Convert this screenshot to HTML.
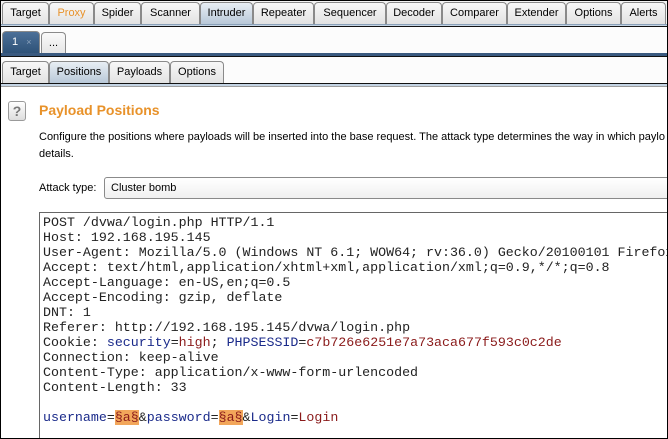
<!DOCTYPE html>
<html style="width:668px;height:439px;overflow:hidden"><head><style>
*{margin:0;padding:0;box-sizing:border-box}
html,body{width:668px;height:439px;overflow:hidden}
body{background:#fff;font-family:"Liberation Sans",sans-serif;font-size:11px;color:#000;position:relative}
.frame{position:absolute;left:0;top:0;width:668px;height:439px;border:1px solid #000;pointer-events:none;z-index:5}
.tab{position:absolute;height:22px;border:1px solid #8a8a8a;border-bottom:none;border-radius:4px 4px 0 0;background:linear-gradient(#f8f8f8,#e2e2e2);text-align:center;line-height:21px;font-size:11px}
.sel{background:linear-gradient(#e8eef4,#b8c8d8)}
.bar{position:absolute;left:0;width:668px}
.mono{font-family:"Liberation Mono","DejaVu Sans Mono",monospace;font-size:13.3px;line-height:15px;white-space:pre;color:#222;overflow:hidden}
.b{color:#1a2a8a}.r{color:#8a1a1a}.h{background:#f2a65a;color:#8a1a1a}
</style></head><body>
<div class="frame"></div>
<div class="bar" style="top:0;height:24px;background:#f4f4f4"></div>
<div class="tab" style="left:2px;width:47px;top:2px">Target</div>
<div class="tab" style="left:49px;width:45px;top:2px;color:#e8922a">Proxy</div>
<div class="tab" style="left:94px;width:47px;top:2px">Spider</div>
<div class="tab" style="left:141px;width:59px;top:2px">Scanner</div>
<div class="tab sel" style="left:200px;width:53px;top:2px">Intruder</div>
<div class="tab" style="left:253px;width:61px;top:2px">Repeater</div>
<div class="tab" style="left:314px;width:72px;top:2px">Sequencer</div>
<div class="tab" style="left:386px;width:56px;top:2px">Decoder</div>
<div class="tab" style="left:442px;width:65px;top:2px">Comparer</div>
<div class="tab" style="left:507px;width:59px;top:2px">Extender</div>
<div class="tab" style="left:566px;width:55px;top:2px">Options</div>
<div class="tab" style="left:621px;width:45px;top:2px">Alerts</div>
<div class="bar" style="top:24px;height:3px;background:#c4d4e4;border-top:1px solid #8aa0b8;border-bottom:1px solid #111"></div>
<div class="bar" style="top:27px;height:26px;background:#fcfcfc"></div>
<div class="tab" style="left:2px;width:38px;top:31px;background:linear-gradient(#4c7098,#2e5278);color:#fff;text-align:left;padding-left:9px">1 <span style="color:#8aa2bc;font-size:9px;margin-left:5px">×</span></div>
<div class="tab" style="left:41px;width:25px;top:32px;height:21px;background:linear-gradient(#fafafa,#e6e6e6)">...</div>
<div class="bar" style="top:53px;height:4px;background:#3a5a80;border-bottom:1px solid #111"></div>
<div class="bar" style="top:57px;height:27px;background:#fcfcfc"></div>
<div class="tab" style="left:2px;width:47px;top:61px">Target</div>
<div class="tab sel" style="left:49px;width:60px;top:61px">Positions</div>
<div class="tab" style="left:109px;width:61px;top:61px">Payloads</div>
<div class="tab" style="left:170px;width:54px;top:61px">Options</div>
<div class="bar" style="top:83px;height:4px;background:#c4d4e4;border-top:1px solid #111;border-bottom:1px solid #a0a0a0"></div>
<div style="position:absolute;left:8px;top:101px;width:18px;height:20px;border:1px solid #9a9a9a;border-radius:3px;background:linear-gradient(#fff,#ddd);text-align:center;font-weight:bold;font-size:14px;line-height:18px;color:#777">?</div>
<div style="position:absolute;left:39px;top:102px;font-size:14px;font-weight:bold;color:#e8922a">Payload Positions</div>
<div style="position:absolute;left:39px;top:131px;white-space:nowrap">Configure the positions where payloads will be inserted into the base request. The attack type determines the way in which paylo</div>
<div style="position:absolute;left:39px;top:148px">details.</div>
<div style="position:absolute;left:39px;top:182px">Attack type:</div>
<div style="position:absolute;left:104px;top:177px;width:570px;height:22px;border:1px solid #8a8a8a;border-radius:3px;background:linear-gradient(#fff,#f0f0f0);padding-left:6px;line-height:20px">Cluster bomb</div>
<div style="position:absolute;left:39px;top:212px;width:640px;height:240px;border:1px solid #666;background:#fff;padding:2px 0 0 3px" class="mono">POST /dvwa/login.php HTTP/1.1
Host: 192.168.195.145
User-Agent: Mozilla/5.0 (Windows NT 6.1; WOW64; rv:36.0) Gecko/20100101 Firefox/36.0
Accept: text/html,application/xhtml+xml,application/xml;q=0.9,*/*;q=0.8
Accept-Language: en-US,en;q=0.5
Accept-Encoding: gzip, deflate
DNT: 1
Referer: http://192.168.195.145/dvwa/login.php
Cookie: <span class="b">security</span>=<span class="r">high</span>; <span class="b">PHPSESSID</span>=<span class="r">c7b726e6251e7a73aca677f593c0c2de</span>
Connection: keep-alive
Content-Type: application/x-www-form-urlencoded
Content-Length: 33

<span class="b">username</span>=<span class="h">§a§</span>&amp;<span class="b">password</span>=<span class="h">§a§</span>&amp;<span class="b">Login</span>=<span class="r">Login</span></div>
</body></html>
